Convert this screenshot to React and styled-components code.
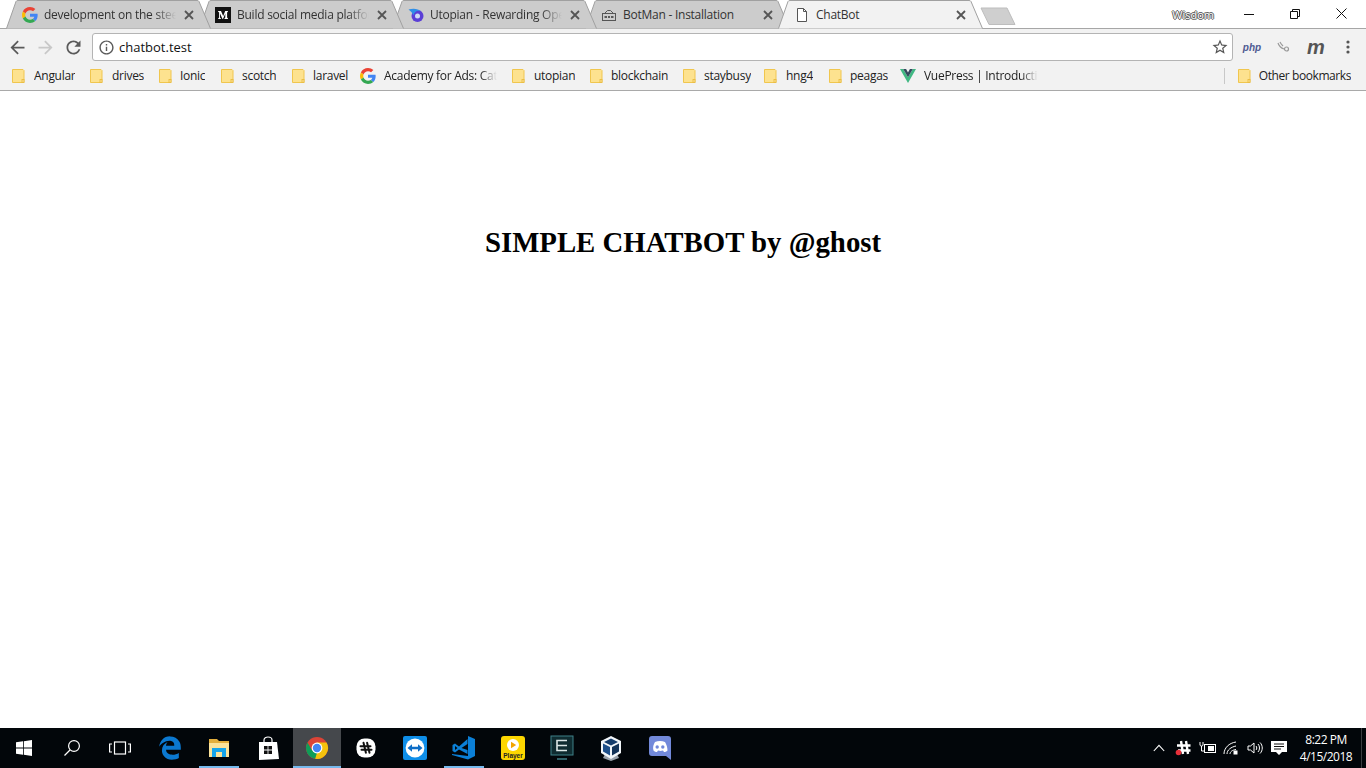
import React from 'react';
import styled, {createGlobalStyle} from 'styled-components';
import {FaEdgeLegacy} from 'react-icons/fa';

const UI_FONT = `"Open Sans", "Noto Sans", sans-serif`;

const GlobalStyle = createGlobalStyle`
  html, body {
    margin: 0;
    padding: 0;
    height: 100%;
    overflow: hidden;
    background: #fff;
  }
  #root {
    height: 100%;
  }
`;

const Screen = styled.div`
  display: flex;
  flex-direction: column;
  height: 768px;
  font-family: ${UI_FONT};
`;

/* tab strip */
const TabStrip = styled.div`
  display: flex;
  flex: none;
  box-sizing: border-box;
  height: 29px;
  padding-left: 6px;
  background: #fff;
  border-bottom: 1px solid #a6a6a6;
`;

const Tab = styled.div`
  position: relative;
  flex: none;
  display: flex;
  align-items: center;
  box-sizing: border-box;
  width: 205px;
  height: 29px;
  margin-right: -12px;
  padding: 0 17px 0 16px;
  z-index: ${(p) => p.$z};
`;

const TabShape = styled.svg`
  position: absolute;
  left: 0;
  top: 0;
  width: 205px;
  height: 29px;
`;

const TabIcon = styled.span`
  position: relative;
  flex: none;
  display: flex;
  width: 16px;
  height: 16px;
  margin-right: 6px;
`;

const TabTitle = styled.span`
  position: relative;
  flex: 1;
  overflow: hidden;
  white-space: nowrap;
  font-size: 12px;
  letter-spacing: -0.25px;
  color: #333;
  -webkit-mask-image: ${(p) => (p.$fade ? 'linear-gradient(to right, #000 84%, transparent 100%)' : 'none')};
`;

const TabClose = styled.svg`
  position: relative;
  flex: none;
  width: 10px;
  height: 10px;
  margin-left: 8px;
`;

const NewTab = styled.svg`
  flex: none;
  width: 38px;
  height: 19px;
  margin: 7px 0 0 8px;
`;

const UserName = styled.span`
  margin: 0 12px 0 auto;
  padding-top: 7px;
  font-size: 11px;
  color: #fff;
  text-shadow: 1px 0 0 #555, -1px 0 0 #555, 0 1px 0 #555, 0 -1px 0 #555;
`;

const WindowButton = styled.div`
  flex: none;
  display: flex;
  align-items: center;
  justify-content: center;
  width: 46px;
  height: 27px;
`;

const WindowButtons = styled.div`
  display: flex;
  padding-right: 2px;
`;

/* address bar */
const Toolbar = styled.div`
  display: flex;
  flex: none;
  box-sizing: border-box;
  height: 34px;
  padding: 4px 2px 0 3px;
  background: #f2f2f2;
`;

const NavButton = styled.div`
  flex: none;
  display: flex;
  align-items: center;
  justify-content: center;
  width: 28px;
  height: 28px;
`;

const Omnibox = styled.div`
  flex: 1;
  display: flex;
  align-items: center;
  box-sizing: border-box;
  height: 28px;
  margin: 0 3px 0 5px;
  padding: 0 3px 0 5px;
  background: #fff;
  border: 1px solid #b4b4b4;
  border-radius: 3px;
`;

const UrlText = styled.span`
  flex: 1;
  margin-left: 4px;
  font-size: 13px;
  color: #111;
`;

const ExtensionButton = styled.div`
  flex: none;
  display: flex;
  align-items: center;
  justify-content: center;
  width: 32px;
  height: 28px;
`;

const PhpBadge = styled.span`
  font-family: "Liberation Sans", sans-serif;
  font-size: 10px;
  font-weight: 700;
  font-style: italic;
  color: #4f5b93;
`;

const MarkBadge = styled.span`
  font-family: "Liberation Sans", sans-serif;
  font-size: 20px;
  font-weight: 700;
  font-style: italic;
  line-height: 18px;
  color: #555;
`;

/* bookmarks */
const BookmarksBar = styled.div`
  display: flex;
  flex: none;
  align-items: center;
  box-sizing: border-box;
  height: 28px;
  padding: 0 0 1px 11px;
  background: #f2f2f2;
  border-bottom: 1px solid #a9a9a9;
`;

const Bookmark = styled.div`
  flex: none;
  display: flex;
  align-items: center;
  width: ${(p) => p.$width}px;
`;

const BookmarkIcon = styled.span`
  flex: none;
  display: flex;
  width: 16px;
  height: 16px;
  margin-right: ${(p) => p.$gap}px;
`;

const BookmarkLabel = styled.span`
  overflow: hidden;
  white-space: nowrap;
  margin-bottom: 2px;
  font-size: 12px;
  letter-spacing: -0.28px;
  color: #222;
  max-width: ${(p) => p.$max || 200}px;
  -webkit-mask-image: ${(p) => (p.$max ? 'linear-gradient(to right, #000 85%, transparent 100%)' : 'none')};
`;

const OtherLabel = styled(BookmarkLabel)`
  letter-spacing: -0.42px;
`;

const BookmarkDivider = styled.div`
  width: 1px;
  height: 16px;
  margin: 0 12px 0 auto;
  background: #c8c8c8;
`;

const OtherBookmarks = styled.div`
  display: flex;
  align-items: center;
  padding-right: 15px;
`;

/* page */
const Page = styled.main`
  flex: 1;
  padding-top: 132px;
  background: #fff;
`;

const Heading = styled.h1`
  margin: 0;
  font-family: "Liberation Serif", "Times New Roman", serif;
  font-size: 28.8px;
  font-weight: 700;
  line-height: 38px;
  text-align: center;
  color: #000;
`;

/* taskbar */
const Taskbar = styled.footer`
  display: flex;
  flex: none;
  align-items: stretch;
  height: 40px;
  background: #02060a;
`;

const ShellButton = styled.div`
  flex: none;
  display: flex;
  align-items: center;
  justify-content: center;
  width: 48px;
`;

const AppList = styled.div`
  display: flex;
  margin-left: 2px;
`;

const AppButton = styled.div`
  position: relative;
  flex: none;
  display: flex;
  align-items: center;
  justify-content: center;
  box-sizing: border-box;
  width: 49px;
  padding-right: 2px;
  background: ${(p) => (p.$focused ? 'linear-gradient(to right, #45484c 48px, #02060a 48px)' : 'transparent')};

  &::after {
    content: '';
    display: ${(p) => (p.$running ? 'block' : 'none')};
    position: absolute;
    left: ${(p) => (p.$focused ? 0 : 4)}px;
    right: ${(p) => (p.$focused ? 1 : 5)}px;
    bottom: 0;
    height: 2px;
    background: #76b9ed;
  }
`;

const Tray = styled.div`
  display: flex;
  align-items: center;
  margin-left: auto;
`;

const TrayIcon = styled.div`
  flex: none;
  display: flex;
  align-items: center;
  justify-content: center;
  width: 24px;
  height: 40px;
`;

const Clock = styled.div`
  display: flex;
  flex-direction: column;
  align-items: center;
  justify-content: center;
  box-sizing: border-box;
  width: 70px;
  height: 40px;
  font-size: 12px;
  letter-spacing: -0.5px;
  line-height: 17px;
  color: #fff;
`;

const ShowDesktop = styled.div`
  flex: none;
  align-self: stretch;
  width: 1px;
  margin-right: 4px;
  background: #3a3d40;
`;

/* drawings */
const GoogleG = ({size = 16}) => (
  <svg width={size} height={size} viewBox="0 0 48 48">
    <path fill="#EA4335" d="M24 9.5c3.54 0 6.71 1.22 9.21 3.6l6.85-6.85C35.9 2.38 30.47 0 24 0 14.62 0 6.51 5.38 2.56 13.22l7.98 6.19C12.43 13.72 17.74 9.5 24 9.5z"/>
    <path fill="#4285F4" d="M46.98 24.55c0-1.57-.15-3.09-.38-4.55H24v9.02h12.94c-.58 2.96-2.26 5.48-4.78 7.18l7.73 6c4.51-4.18 7.09-10.36 7.09-17.65z"/>
    <path fill="#FBBC05" d="M10.53 28.59c-.48-1.45-.76-2.99-.76-4.59s.27-3.14.76-4.59l-7.98-6.19C.92 16.46 0 20.12 0 24c0 3.88.92 7.54 2.56 10.78l7.97-6.19z"/>
    <path fill="#34A853" d="M24 48c6.48 0 11.93-2.13 15.89-5.81l-7.73-6c-2.15 1.45-4.92 2.3-8.16 2.3-6.26 0-11.57-4.22-13.47-9.91l-7.98 6.19C6.51 42.62 14.62 48 24 48z"/>
  </svg>
);

const MediumIcon = () => (
  <svg width="16" height="16" viewBox="0 0 16 16">
    <rect width="16" height="16" fill="#111"/>
    <path fill="#fff" d="M3 4h3l2.2 5L10.2 4H13v.6l-.9.8v5.2l.9.8v.6H9.4v-.6l.9-.8V6.4L8 12h-.5L5 6.6v4l1.1 1.2v.2H3v-.2l1.1-1.2V5.4L3 4.6z"/>
  </svg>
);

const UtopianIcon = () => (
  <svg width="16" height="16" viewBox="0 0 16 16">
    <circle cx="9.500" cy="9" r="6" fill="#5b3fd6"/>
    <circle cx="9.500" cy="9" r="2.500" fill="#cfd9f5"/>
    <path fill="#2f8fe8" d="M.5 2.500C5 1 10 1.500 13.500 4.200 9.500 3 6.500 4 5.500 8.500 4.500 6 2.500 3.800.5 2.500z"/>
  </svg>
);

const BotmanIcon = () => (
  <svg width="16" height="16" viewBox="0 0 16 16" fill="none" stroke="#555" strokeWidth="1">
    <rect x="1.500" y="6.500" width="13" height="7"/>
    <path d="M3.500 6.500 6.500 3.500h3l3 3"/>
    <path d="M3.500 10h2.500M7 10h2M10 10h2.500" strokeWidth="1.600" stroke="#333"/>
  </svg>
);

const PageIcon = () => (
  <svg width="16" height="16" viewBox="0 0 16 16" fill="#fff" stroke="#555" strokeWidth="1">
    <path d="M3.500 1.500h6l3 3v10h-9z"/>
    <path d="M9.500 1.500v3h3" fill="none"/>
  </svg>
);

const FolderIcon = () => (
  <svg width="16" height="16" viewBox="0 0 16 16">
    <path d="M1.500 1.500h10.500l1 1v12H1.500z" fill="#fde28f" stroke="#f0c64e"/>
    <rect x="11" y="11.500" width="2" height="3" fill="#fde28f" stroke="#e8b93c" strokeWidth="0.8"/>
  </svg>
);

const VueIcon = () => (
  <svg width="16" height="16" viewBox="0 0 16 16">
    <path fill="#41b883" d="M0 1h3.200L8 9.300 12.800 1H16L8 15z"/>
    <path fill="#35495e" d="M3.200 1h2.900L8 4.400 9.900 1h2.900L8 9.300z"/>
  </svg>
);

const ArrowIcon = ({flip, color}) => (
  <svg width="21" height="21" viewBox="0 0 24 24" fill={color} style={flip ? {transform: 'scaleX(-1)'} : undefined}>
    <path d="M20 11H7.830l5.590-5.590L12 4l-8 8 8 8 1.410-1.410L7.830 13H20v-2z"/>
  </svg>
);

const ReloadIcon = () => (
  <svg width="21" height="21" viewBox="0 0 24 24" fill="#5a5a5a">
    <path d="M17.650 6.350C16.200 4.900 14.210 4 12 4c-4.420 0-7.990 3.580-7.990 8s3.570 8 7.990 8c3.730 0 6.840-2.550 7.730-6h-2.080c-.820 2.330-3.040 4-5.650 4-3.310 0-6-2.690-6-6s2.690-6 6-6c1.660 0 3.140.690 4.220 1.780L13 11h7V4l-2.350 2.350z"/>
  </svg>
);

const InfoIcon = () => (
  <svg width="17" height="17" viewBox="0 0 24 24" fill="#5a5a5a">
    <path d="M11 7h2v2h-2zm0 4h2v6h-2zm1-9C6.480 2 2 6.480 2 12s4.480 10 10 10 10-4.480 10-10S17.520 2 12 2zm0 18c-4.410 0-8-3.590-8-8s3.590-8 8-8 8 3.590 8 8-3.590 8-8 8z"/>
  </svg>
);

const StarIcon = () => (
  <svg width="18" height="18" viewBox="0 0 24 24" fill="#555">
    <path d="M22 9.240l-7.190-.620L12 2 9.190 8.630 2 9.240l5.460 4.730L5.820 21 12 17.270 18.180 21l-1.630-7.030L22 9.240zM12 15.400l-3.760 2.270 1-4.280-3.320-2.880 4.380-.380L12 6.100l1.710 4.040 4.380.380-3.320 2.880 1 4.280L12 15.400z"/>
  </svg>
);

const LinkExtensionIcon = () => (
  <svg width="14" height="12" viewBox="0 0 14 12" fill="none" stroke="#999" strokeWidth="1.200">
    <path d="M1 2c1 3 3 5 6 6"/>
    <circle cx="9.500" cy="8" r="2"/>
    <path d="M3 1c1 2 2 3 3 4"/>
  </svg>
);

const MenuDots = () => (
  <svg width="4" height="14" viewBox="0 0 4 14" fill="#555">
    <circle cx="2" cy="2" r="1.600"/>
    <circle cx="2" cy="7" r="1.600"/>
    <circle cx="2" cy="12" r="1.600"/>
  </svg>
);

const WindowsLogo = () => (
  <svg width="16" height="16" viewBox="0 0 16 16" fill="#fff">
    <path d="M0 2.300 7 1.300V7.600H0zM7.800 1.200 16 0v7.600H7.800zM0 8.400h7v6.300l-7-1zM7.800 8.400H16V16l-8.200-1.200z"/>
  </svg>
);

const SearchIcon = () => (
  <svg width="18" height="18" viewBox="0 0 18 18" fill="none" stroke="#fff" strokeWidth="1.200">
    <circle cx="11" cy="7" r="5.400"/>
    <path d="M7 11 1.500 16.500"/>
  </svg>
);

const TaskViewIcon = () => (
  <svg width="22" height="14" viewBox="0 0 22 14" fill="none" stroke="#fff" strokeWidth="1.200">
    <rect x="5.500" y="1" width="11" height="12"/>
    <path d="M3 3H.6v8H3M19 3h2.400v8H19"/>
  </svg>
);

const ExplorerIcon = () => (
  <svg width="22" height="20" viewBox="0 0 22 20">
    <path fill="#e3ae3c" d="M1 1h8l2 2h10v3H1z"/>
    <rect x="1" y="5" width="20" height="14" fill="#fbe29a"/>
    <path fill="#16a4ea" d="M4 10h14v9h-4v-5H8v5H4z"/>
  </svg>
);

const StoreIcon = () => (
  <svg width="22" height="24" viewBox="0 0 22 24">
    <path fill="none" stroke="#fff" strokeWidth="1.200" d="M7 7V4c0-4 8-4 8 0v3"/>
    <path fill="#fff" d="M2 6h18l2 17-20 1z"/>
    <path fill="#111" d="M7 10h3.600v3.600H7zM11.400 10H15v3.600h-3.600zM7 14.400h3.600V18H7zM11.400 14.400H15V18h-3.600z"/>
  </svg>
);

const ChromeIcon = () => (
  <svg width="24" height="24" viewBox="0 0 24 24">
    <circle cx="12" cy="12" r="11" fill="#db4437"/>
    <path fill="#f4c20d" d="M21.530 6.500H12l-1.900 16.340A11 11 0 0 0 21.530 6.500z"/>
    <path fill="#0f9d58" d="M2.470 6.500 7.200 14.800l2.900 8.040A11 11 0 0 1 2.470 6.500z"/>
    <path fill="#0f9d58" d="M7 14 12 17l-1.900 5.840L5 17z"/>
    <circle cx="12" cy="12" r="5.400" fill="#fff"/>
    <circle cx="12" cy="12" r="4.200" fill="#4285f4"/>
  </svg>
);

const SlackIcon = () => (
  <svg width="22" height="22" viewBox="0 0 22 22">
    <rect x="1.500" y="1.500" width="19" height="19" rx="8" fill="#fff"/>
    <path stroke="#111" strokeWidth="2" strokeLinecap="round" d="M9 6l2.400 10M12.600 6 15 16M6 9.400h10M7 13h10" transform="translate(-.5 -.2)"/>
  </svg>
);

const TeamViewerIcon = () => (
  <svg width="24" height="24" viewBox="0 0 24 24">
    <rect width="24" height="24" rx="2" fill="#0e8ee9"/>
    <circle cx="12" cy="12" r="9.400" fill="#fff"/>
    <path fill="#0e6ec7" d="M4.500 12 9 8.300v2.400h6V8.300l4.500 3.700-4.500 3.700v-2.400H9v2.400z"/>
  </svg>
);

const VsCodeIcon = () => (
  <svg width="24" height="24" viewBox="0 0 24 24">
    <path fill="#0b7fd6" d="M16 0l7 3v17l-7 3.500L0 19v-1l16 2z"/>
    <path fill="#0b7fd6" d="M15.500 3 7 10.500 3 7.500.5 9v6L3 16.500l4-3 8.500 4.500v-4L9.500 12l6-4z"/>
    <path fill="#02060a" d="M3 10v4l2.500-2z"/>
  </svg>
);

const PlayerIcon = () => (
  <svg width="24" height="24" viewBox="0 0 24 24">
    <rect width="24" height="24" rx="3" fill="#fdd600"/>
    <circle cx="12" cy="9" r="6" fill="#fff"/>
    <path fill="#f2a500" d="M10 5.800 15.200 9 10 12.200z"/>
    <text x="12" y="21.500" textAnchor="middle" fontFamily="Liberation Sans, sans-serif" fontSize="6.500" fontWeight="700" fill="#222">Player</text>
  </svg>
);

const ElementaryIcon = () => (
  <svg width="24" height="26" viewBox="0 0 24 26" fill="none">
    <rect x="1" y="1" width="22" height="19" fill="#0f2c31" stroke="#3f8088" strokeWidth="1"/>
    <path stroke="#dbe6e6" strokeWidth="1.600" d="M17 5.500H7v10h10M7.500 10.500H17"/>
    <path stroke="#3f8088" strokeWidth="1.500" d="M7 24h10"/>
  </svg>
);

const VirtualBoxIcon = () => (
  <svg width="24" height="26" viewBox="0 0 24 26">
    <path fill="#9aa3ad" d="M6 19h12l2 4-8 3-8-3z"/>
    <path fill="#f2f6fa" d="M12 1 22 6v12l-10 6L2 18V6z"/>
    <path fill="#143c6c" d="M12 3.500 19 7l-7 3.500L5 7z"/>
    <path fill="#1d4f8a" d="M4 8.500l7 3.500v8.500l-7-4z"/>
    <path fill="#123258" d="M20 8.500 13 12v8.500l7-4z"/>
  </svg>
);

const DiscordIcon = () => (
  <svg width="24" height="26" viewBox="0 0 24 26">
    <path fill="#7289da" d="M4 1h16a3 3 0 0 1 3 3v21l-5-4H4a3 3 0 0 1-3-3V4a3 3 0 0 1 3-3z"/>
    <path fill="#fff" d="M7 7c3-1.200 7-1.200 10 0 1.500 2.500 2.500 5.500 2.500 8.500-1 1-2.500 1.500-3.500 1.500l-1-1.500c-2 .5-3 .5-5 0l-1 1.500c-1 0-2.500-.5-3.500-1.500C4.500 12.500 5.500 9.500 7 7z"/>
    <circle cx="9.200" cy="12" r="1.700" fill="#7289da"/>
    <circle cx="14.800" cy="12" r="1.700" fill="#7289da"/>
  </svg>
);

const ChevronUp = () => (
  <svg width="12" height="8" viewBox="0 0 12 8" fill="none" stroke="#fff" strokeWidth="1.100">
    <path d="M.8 7 6 1.400 11.200 7"/>
  </svg>
);

const SlackTrayIcon = () => (
  <svg width="16" height="16" viewBox="0 0 16 16">
    <path stroke="#fff" strokeWidth="2.400" d="M6 1l2 13M11 1l2 13M2 5.500h13.500M3 10.500h12.500"/>
    <circle cx="3.500" cy="12.500" r="2.800" fill="#e8303a"/>
  </svg>
);

const BatteryIcon = () => (
  <svg width="17" height="14" viewBox="0 0 17 14" fill="none" stroke="#fff">
    <rect x="5.500" y="3.500" width="11" height="8"/>
    <rect x="9" y="5" width="6" height="5" fill="#fff" stroke="none"/>
    <path d="M1 1v3c0 1.400 3 1.400 3 0V1M2.500 5v5h3"/>
  </svg>
);

const WifiIcon = () => (
  <svg width="16" height="14" viewBox="0 0 16 14" fill="none" stroke="#fff" strokeWidth="1">
    <path d="M1 13C1 7 6 2 13 1M4 13c0-4 4-7 9-8M7 13c0-2 2-4 6-4.500"/>
    <rect x="11" y="10" width="3" height="3" fill="#fff"/>
  </svg>
);

const VolumeIcon = () => (
  <svg width="16" height="14" viewBox="0 0 16 14" fill="none" stroke="#fff" strokeWidth="1">
    <path d="M1 5v4h2.500L7 12V2L3.500 5z"/>
    <path d="M9 5c1 1 1 3 0 4M11 3c2 2 2 6 0 8M13 1.500c3 3 3 8 0 11"/>
  </svg>
);

const NotificationIcon = () => (
  <svg width="16" height="16" viewBox="0 0 16 16">
    <path fill="#fff" d="M0 1h16v11h-5l-3 3-3-3H0z"/>
    <path stroke="#111" d="M3 4h10M3 6.500h10M3 9h7"/>
  </svg>
);

const TABS = [
  {title: 'development on the steem blockchain', icon: <GoogleG/>, fade: true},
  {title: 'Build social media platform', icon: <MediumIcon/>, fade: true},
  {title: 'Utopian - Rewarding Open Source', icon: <UtopianIcon/>, fade: true},
  {title: 'BotMan - Installation', icon: <BotmanIcon/>},
  {title: 'ChatBot', icon: <PageIcon/>, active: true},
];

const BOOKMARKS = [
  {label: 'Angular', width: 78, gap: 7},
  {label: 'drives', width: 69, gap: 7},
  {label: 'Ionic', width: 62, gap: 6},
  {label: 'scotch', width: 71, gap: 6},
  {label: 'laravel', width: 69, gap: 6},
  {label: 'Academy for Ads: Catalog', width: 151, gap: 8, icon: <GoogleG/>, max: 113},
  {label: 'utopian', width: 78, gap: 7},
  {label: 'blockchain', width: 93, gap: 6},
  {label: 'staybusy', width: 81, gap: 6},
  {label: 'hng4', width: 65, gap: 7},
  {label: 'peagas', width: 72, gap: 6},
  {label: 'VuePress | Introduction', width: 140, gap: 8, icon: <VueIcon/>, max: 114},
];

const APPS = [
  {icon: <FaEdgeLegacy size={24} color="#0b78d0"/>},
  {icon: <ExplorerIcon/>, running: true},
  {icon: <StoreIcon/>},
  {icon: <ChromeIcon/>, running: true, focused: true},
  {icon: <SlackIcon/>},
  {icon: <TeamViewerIcon/>},
  {icon: <VsCodeIcon/>, running: true},
  {icon: <PlayerIcon/>},
  {icon: <ElementaryIcon/>},
  {icon: <VirtualBoxIcon/>},
  {icon: <DiscordIcon/>},
];

const App = () => {
  return (
    <Screen>
      <GlobalStyle/>
      <TabStrip>
        {TABS.map((tab, i) => (
          <Tab key={tab.title} $z={tab.active ? 10 : TABS.length - i}>
            <TabShape viewBox="0 0 205 29">
              <path
                d="M0.500 28.500 L10 1.500 Q10.500 0.500 12 0.500 L191 0.500 Q192.500 0.500 193 1.500 L204.500 28.500"
                fill={tab.active ? '#f2f2f2' : '#cccccc'}
                stroke="#a0a0a0"
              />
            </TabShape>
            <TabIcon>{tab.icon}</TabIcon>
            <TabTitle $fade={tab.fade}>{tab.title}</TabTitle>
            <TabClose viewBox="0 0 10 10" stroke="#555" strokeWidth="1.800">
              <path d="M1 1l8 8M9 1l-8 8"/>
            </TabClose>
          </Tab>
        ))}
        <NewTab viewBox="0 0 38 19">
          <path d="M2 1h26l8 16.500H10z" fill="#cfcfcf" stroke="#bdbdbd"/>
        </NewTab>
        <UserName>Wisdom</UserName>
        <WindowButtons>
          <WindowButton>
            <svg width="10" height="10" viewBox="0 0 10 10" stroke="#111"><path d="M0 5.500h10"/></svg>
          </WindowButton>
          <WindowButton>
            <svg width="10" height="10" viewBox="0 0 10 10" fill="none" stroke="#111"><path d="M.5 2.500h7v7h-7zM2.500 2.500v-2h7v7h-2"/></svg>
          </WindowButton>
          <WindowButton>
            <svg width="11" height="11" viewBox="0 0 11 11" stroke="#111"><path d="M.5.500l10 10M10.500.500l-10 10"/></svg>
          </WindowButton>
        </WindowButtons>
      </TabStrip>

      <Toolbar>
        <NavButton><ArrowIcon color="#5a5a5a"/></NavButton>
        <NavButton><ArrowIcon flip color="#c8c8c8"/></NavButton>
        <NavButton><ReloadIcon/></NavButton>
        <Omnibox>
          <InfoIcon/>
          <UrlText>chatbot.test</UrlText>
          <StarIcon/>
        </Omnibox>
        <ExtensionButton><PhpBadge>php</PhpBadge></ExtensionButton>
        <ExtensionButton><LinkExtensionIcon/></ExtensionButton>
        <ExtensionButton><MarkBadge>m</MarkBadge></ExtensionButton>
        <ExtensionButton><MenuDots/></ExtensionButton>
      </Toolbar>

      <BookmarksBar>
        {BOOKMARKS.map((item) => (
          <Bookmark key={item.label} $width={item.width}>
            <BookmarkIcon $gap={item.gap}>{item.icon || <FolderIcon/>}</BookmarkIcon>
            <BookmarkLabel $max={item.max}>{item.label}</BookmarkLabel>
          </Bookmark>
        ))}
        <BookmarkDivider/>
        <OtherBookmarks>
          <BookmarkIcon $gap={6}><FolderIcon/></BookmarkIcon>
          <OtherLabel>Other bookmarks</OtherLabel>
        </OtherBookmarks>
      </BookmarksBar>

      <Page>
        <Heading>SIMPLE CHATBOT by @ghost</Heading>
      </Page>

      <Taskbar>
        <ShellButton><WindowsLogo/></ShellButton>
        <ShellButton><SearchIcon/></ShellButton>
        <ShellButton><TaskViewIcon/></ShellButton>
        <AppList>
          {APPS.map((app, i) => (
            <AppButton key={i} $running={app.running} $focused={app.focused}>{app.icon}</AppButton>
          ))}
        </AppList>
        <Tray>
          <TrayIcon><ChevronUp/></TrayIcon>
          <TrayIcon><SlackTrayIcon/></TrayIcon>
          <TrayIcon><BatteryIcon/></TrayIcon>
          <TrayIcon><WifiIcon/></TrayIcon>
          <TrayIcon><VolumeIcon/></TrayIcon>
          <TrayIcon><NotificationIcon/></TrayIcon>
          <Clock>
            <span>8:22 PM</span>
            <span>4/15/2018</span>
          </Clock>
          <ShowDesktop/>
        </Tray>
      </Taskbar>
    </Screen>
  );
};

export default App;
